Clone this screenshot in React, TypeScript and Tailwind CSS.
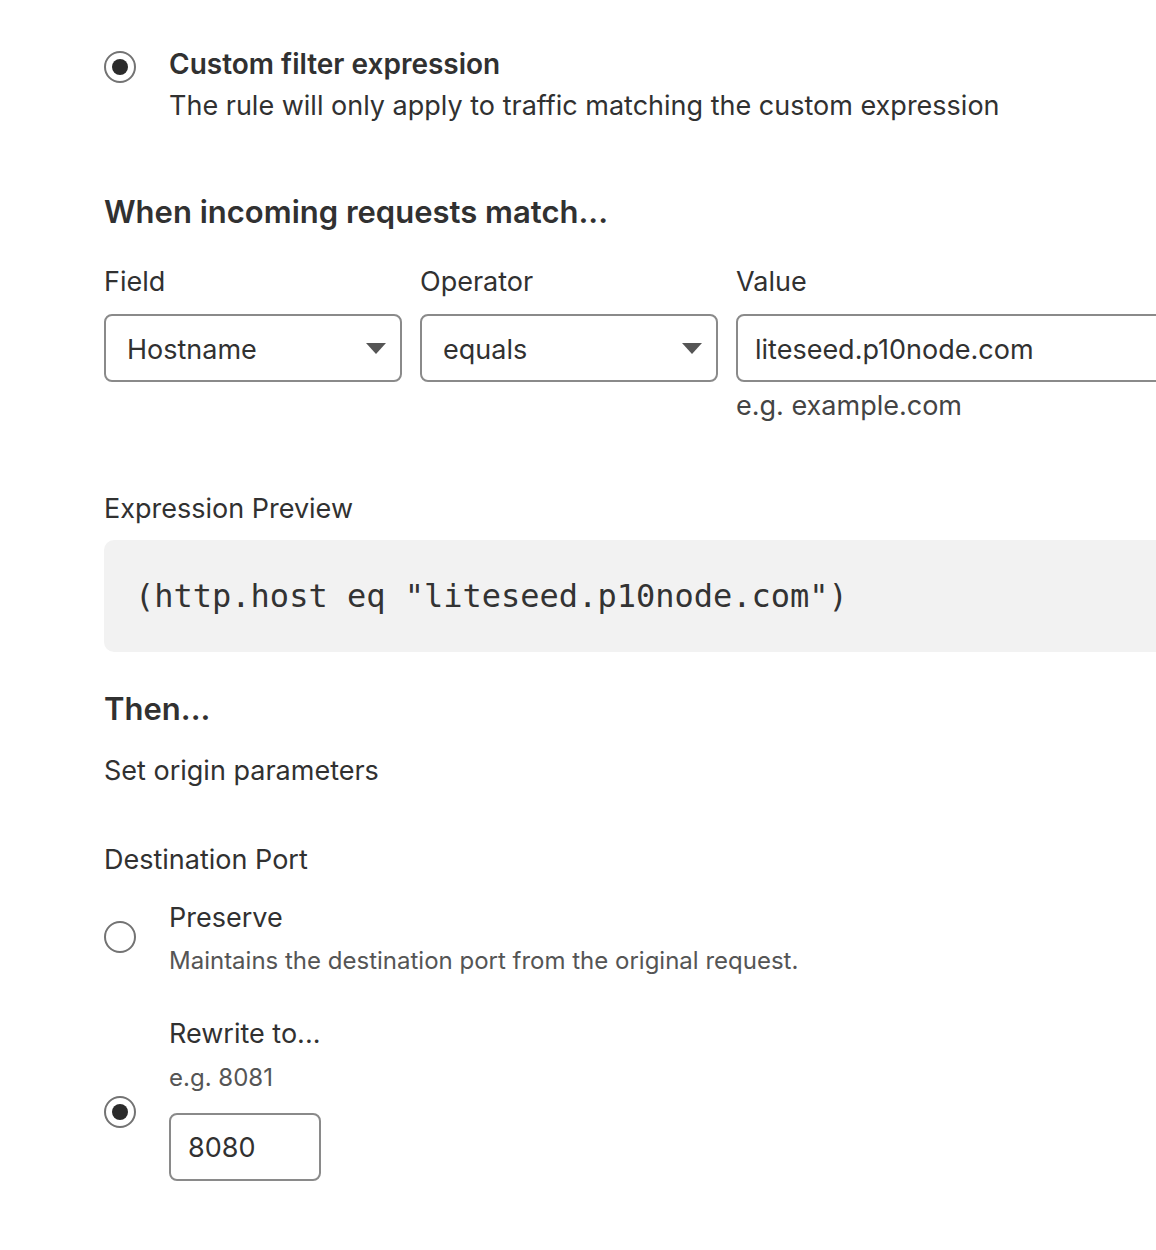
import React from 'react';

const Radio = ({ checked }: { checked?: boolean }) => (
  <span className="flex h-[32px] w-[32px] shrink-0 items-center justify-center rounded-full border-2 border-[#737373] bg-white">
    {checked && <span className="h-[16px] w-[16px] rounded-full bg-[#2b2b2b]" />}
  </span>
);

const Select = ({ value }: { value: string }) => (
  <div className="flex h-[68px] w-[298px] items-center justify-between rounded-[8px] border-2 border-[#8a8a8a] bg-white pl-[21px] pr-[14px]">
    <span className="pt-[4px]">{value}</span>
    <svg width="20" height="11" viewBox="0 0 20 11" className="fill-[#555]">
      <path d="M0 0h20L10 11z" />
    </svg>
  </div>
);

export default function App() {
  return (
    <div className="w-[1156px] h-[1250px] overflow-hidden bg-white font-['Inter',sans-serif] text-[27px] text-[#313131]">
      <div className="w-[1400px] pl-[104px] pt-[46px]">
        <div className="flex gap-[33px]">
          <div className="pt-[5px]">
            <Radio checked />
          </div>
          <div>
            <div className="text-[28px] font-semibold leading-[36px]">Custom filter expression</div>
            <div className="mt-[6px] leading-[36px]">The rule will only apply to traffic matching the custom expression</div>
          </div>
        </div>

        <h2 className="mt-[68px] text-[31px] font-semibold leading-[40px]">When incoming requests match...</h2>

        <div className="mt-[32px] flex gap-[18px]">
          <div>
            <div className="mb-[14px] leading-[36px]">Field</div>
            <Select value="Hostname" />
          </div>
          <div>
            <div className="mb-[14px] leading-[36px]">Operator</div>
            <Select value="equals" />
          </div>
          <div>
            <div className="mb-[14px] leading-[36px]">Value</div>
            <div className="flex h-[68px] w-[560px] items-center rounded-[8px] border-2 border-[#8a8a8a] bg-white pl-[17px] pt-[4px]">
              liteseed.p10node.com
            </div>
            <div className="mt-[6px] leading-[36px] text-[#444]">e.g. example.com</div>
          </div>
        </div>

        <div className="mt-[67px] leading-[36px]">Expression Preview</div>
        <div className="mt-[13px] flex h-[112px] w-[1200px] items-center rounded-[10px] bg-[#f2f2f2] pl-[31px] font-['DejaVu_Sans_Mono',monospace] text-[32px] text-[#333]">
          (http.host eq "liteseed.p10node.com")
        </div>

        <h2 className="mt-[37px] text-[31px] font-semibold leading-[40px]">Then...</h2>
        <div className="mt-[24px] leading-[36px]">Set origin parameters</div>

        <div className="mt-[53px] leading-[36px]">Destination Port</div>

        <div className="mt-[22px] flex items-start gap-[33px]">
          <div className="pt-[21px]">
            <Radio />
          </div>
          <div>
            <div className="leading-[36px]">Preserve</div>
            <div className="mt-[10px] text-[24px] leading-[30px] text-[#555]">Maintains the destination port from the original request.</div>
          </div>
        </div>

        <div className="mt-[40px] flex items-start gap-[33px]">
          <div className="pt-[80px]">
            <Radio checked />
          </div>
          <div>
            <div className="leading-[36px]">Rewrite to...</div>
            <div className="mt-[11px] text-[24px] leading-[30px] text-[#555]">e.g. 8081</div>
            <div className="mt-[20px] flex h-[68px] w-[152px] items-center rounded-[8px] border-2 border-[#8a8a8a] bg-white pl-[17px] pt-[3px]">
              8080
            </div>
          </div>
        </div>
      </div>
    </div>
  );
}
